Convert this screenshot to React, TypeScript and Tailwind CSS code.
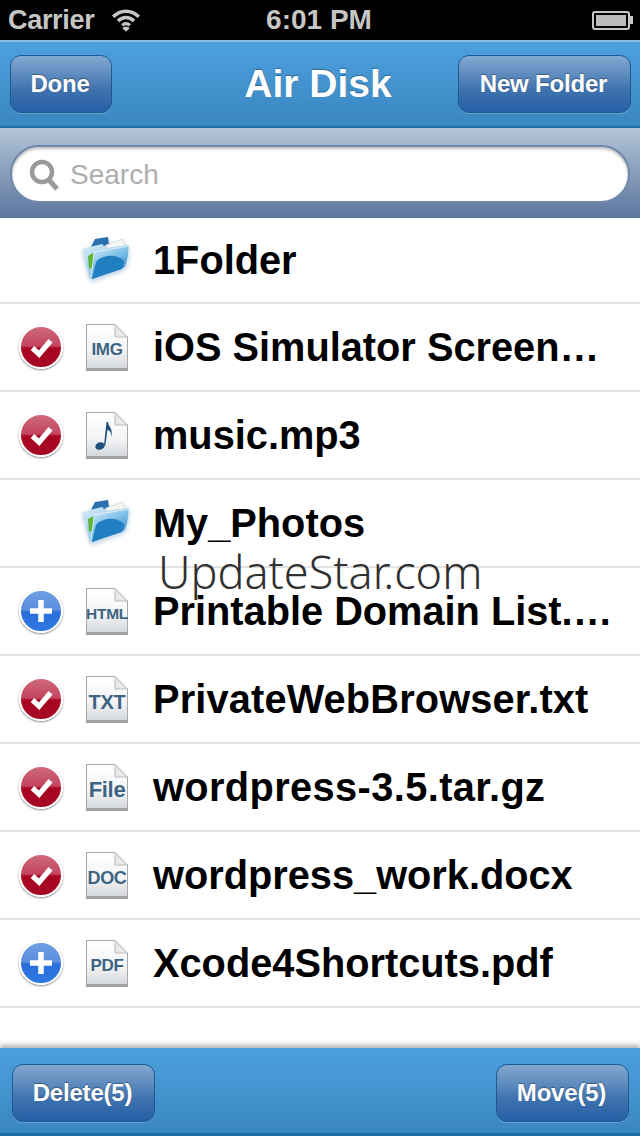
import React from "react";

const FONT = "[font-family:'Liberation_Sans',Arial,sans-serif]";

function Check() {
  return (
    <div className="flex h-[44px] w-[44px] items-center justify-center rounded-full border-2 border-white bg-[linear-gradient(180deg,#cf6a7c_0%,#c2465f_48%,#aa0420_52%,#a50a24_100%)] shadow-[0_1px_2px_rgba(0,0,0,0.5)]">
      <svg width="23" height="21" viewBox="0 0 24 22">
        <path d="M2.5 11.5 L9.5 18 L21.5 4" fill="none" stroke="#fff" strokeWidth="5.5" />
      </svg>
    </div>
  );
}

function Plus() {
  return (
    <div className="flex h-[44px] w-[44px] items-center justify-center rounded-full border-2 border-white bg-[linear-gradient(180deg,#6f9fe2_0%,#5a8fdf_48%,#2a6fdc_52%,#2f78e0_100%)] shadow-[0_1px_2px_rgba(0,0,0,0.5)]">
      <svg width="22" height="22" viewBox="0 0 22 22">
        <path d="M0 11 H22 M11 0 V22" fill="none" stroke="#fff" strokeWidth="5.5" />
      </svg>
    </div>
  );
}

function Doc({ label, size, music }: { label?: string; size?: string; music?: boolean }) {
  return (
    <div className="relative ml-[3px] h-[47px] w-[42px]">
      <svg width="42" height="47" viewBox="0 0 42 47" className="absolute left-0 top-0">
        <defs>
          <linearGradient id="docfill" x1="0" y1="0" x2="0" y2="1">
            <stop offset="0" stopColor="#ffffff" />
            <stop offset="0.6" stopColor="#f2f3f5" />
            <stop offset="1" stopColor="#d4d7da" />
          </linearGradient>
        </defs>
        <path d="M0.5 0.5 H29 L41.5 13 V45 H0.5 Z" fill="url(#docfill)" stroke="#a8a8a8" />
        <path d="M29 0.5 V13 H41.5 Z" fill="#e8e8e8" stroke="#bdbdbd" />
        <rect x="0" y="44" width="42" height="3" fill="#a0a0a0" />
        {music && (
          <g fill="#1f4f7c">
            <ellipse cx="14" cy="34" rx="4.8" ry="3.6" transform="rotate(-20 14 34)" />
            <path d="M18 33 L20.5 10 L22 10 C22.5 15 27 16 25.5 25 C25 19 23 18 21.5 18 L19.2 34 Z" />
          </g>
        )}
      </svg>
      {label && (
        <span
          className={`absolute inset-x-0 top-[14px] text-center font-bold leading-[24px] tracking-[-0.3px] text-[#3d6482] ${FONT} ${size ?? "text-[17px]"}`}
        >
          {label}
        </span>
      )}
    </div>
  );
}

function Folder() {
  return (
    <svg width="48" height="46" viewBox="0 0 48 46" className="-ml-[1px] block drop-shadow-[0_2px_2px_rgba(60,120,170,0.35)]">
      <defs>
        <linearGradient id="fback" x1="0" y1="0" x2="1" y2="1">
          <stop offset="0" stopColor="#dcedf8" />
          <stop offset="1" stopColor="#5fb0e0" />
        </linearGradient>
        <linearGradient id="ffront" x1="0" y1="0" x2="0.6" y2="1">
          <stop offset="0" stopColor="#dff0fa" />
          <stop offset="0.5" stopColor="#7cc0e8" />
          <stop offset="1" stopColor="#2d86c6" />
        </linearGradient>
      </defs>
      <path d="M8 12 L13 2 L26 0 L27 7 L8 14 Z" fill="#2a6fb0" />
      <path d="M24 8 L41 2 L44 12 L26 16 Z" fill="#f4f6f2" stroke="#c8d0d0" strokeWidth="0.6" />
      <path d="M0 12 L20 7 L24 11 L47 8 L44 28 L8 42 Z" fill="url(#fback)" />
      <path d="M6 19 L13 15 L11 30 L7 32 Z" fill="#5cb335" />
      <path d="M12 15 L47 9 C47 20 44 30 42 31 L9 43 Z" fill="url(#ffront)" stroke="#e8f4fb" strokeWidth="0.8" />
      <path d="M10 42 L14 25 C20 18 34 16 42 24 C42 27 41 30 40 32 Z" fill="#1f7fc0" />
    </svg>
  );
}

function Bevel({ children, className }: { children: React.ReactNode; className: string }) {
  return (
    <div
      className={`flex h-[58px] items-center justify-center rounded-[11px] border border-[#1d5a92] bg-[linear-gradient(180deg,#84a8d0_0%,#5c8abd_35%,#3f72ae_60%,#2660a6_100%)] pr-[2px] font-bold tracking-[-0.2px] text-white [text-shadow:0_-1px_1px_rgba(0,0,0,0.35)] shadow-[0_1px_0_rgba(255,255,255,0.2)] ${className}`}
    >
      {children}
    </div>
  );
}

type RowData = { name: string; mark?: "check" | "plus"; icon: React.ReactNode; h: string; t?: string };

const rows: RowData[] = [
  { name: "1Folder", icon: <Folder />, h: "h-[86px]" },
  { name: "iOS Simulator Screen…", mark: "check", icon: <Doc label="IMG" />, h: "h-[88px]" },
  { name: "music.mp3", mark: "check", icon: <Doc music />, h: "h-[88px]" },
  { name: "My_Photos", icon: <Folder />, h: "h-[88px]" },
  { name: "Printable Domain List.…", mark: "plus", icon: <Doc label="HTML" size="text-[15.5px]" />, h: "h-[88px]" },
  { name: "PrivateWebBrowser.txt", mark: "check", icon: <Doc label="TXT" size="text-[20px]" />, h: "h-[88px]", t: "tracking-[0.15px]" },
  { name: "wordpress-3.5.tar.gz", mark: "check", icon: <Doc label="File" size="text-[22px]" />, h: "h-[88px]", t: "tracking-[0.4px]" },
  { name: "wordpress_work.docx", mark: "check", icon: <Doc label="DOC" size="text-[18px]" />, h: "h-[88px]" },
  { name: "Xcode4Shortcuts.pdf", mark: "plus", icon: <Doc label="PDF" />, h: "h-[88px]" },
];

export default function App() {
  return (
    <div className={`relative flex h-[1136px] w-[640px] flex-col overflow-hidden bg-white ${FONT}`}>
      <div className="flex h-[40px] items-center justify-between bg-black pl-[8px] pr-[7px] text-[#c6c6c6]">
        <div className="flex w-[200px] items-center gap-[17px]">
          <span className="text-[27px] font-bold tracking-[-0.3px]">Carrier</span>
          <svg width="30" height="26" viewBox="0 0 28 24">
            <path d="M2 9 C9 2 19 2 26 9 M6.5 13 C11 8.5 17 8.5 21.5 13 M10.5 17 C12.5 15 15.5 15 17.5 17" fill="none" stroke="#c6c6c6" strokeWidth="3.2" />
            <path d="M14 23 L10.5 19.5 C12.5 17.8 15.5 17.8 17.5 19.5 Z" fill="#c6c6c6" />
          </svg>
        </div>
        <span className="pr-[3px] text-[28px] font-bold">6:01 PM</span>
        <div className="flex w-[200px] items-center justify-end">
          <div className="flex h-[19px] w-[38px] items-center rounded-[3px] border-2 border-[#c6c6c6] p-[2px]">
            <div className="h-full w-full bg-[#bdbdbd]" />
          </div>
          <div className="h-[8px] w-[3px] bg-[#c6c6c6]" />
        </div>
      </div>

      <div className="grid h-[88px] grid-cols-[1fr_auto_1fr] items-center border-t-2 border-b-2 border-t-[#8cbbdf] border-b-[#1c6fa8] bg-linear-to-b from-[#4da0de] to-[#3a86c0] px-[9px]">
        <Bevel className="ml-px w-[102px] justify-self-start text-[24px]">Done</Bevel>
        <span className="pr-[4px] text-[39px] font-bold text-white [text-shadow:0_-1px_1px_rgba(0,0,0,0.3)]">Air Disk</span>
        <Bevel className="w-[173px] justify-self-end text-[24px]">New Folder</Bevel>
      </div>

      <div className="flex h-[90px] items-center bg-linear-to-b from-[#b3c5d8] to-[#5d769e] px-[10px] pt-[2px]">
        <div className="flex h-[58px] w-full items-center rounded-full border-2 border-[#6f88a8] bg-white pl-[17px] pt-[2px] shadow-[inset_0_2px_3px_rgba(0,0,0,0.25)]">
          <svg width="30" height="32" viewBox="0 0 30 32">
            <circle cx="13" cy="13" r="10" fill="none" stroke="#9a9a9a" strokeWidth="4.5" />
            <path d="M20 21 L28 30" stroke="#9a9a9a" strokeWidth="5" />
          </svg>
          <span className="ml-[11px] text-[28px] text-[#aeaeae]">Search</span>
        </div>
      </div>

      <div className="flex-1 bg-white">
        {rows.map((r) => (
          <div key={r.name} className={`flex items-center border-b-2 border-[#e2e2e2] pl-[19px] ${r.h}`}>
            <div className="flex h-[44px] w-[44px] items-center justify-center">
              {r.mark === "check" && <Check />}
              {r.mark === "plus" && <Plus />}
            </div>
            <div className="ml-[20px] flex w-[48px] justify-start">{r.icon}</div>
            <span className={`ml-[22px] whitespace-nowrap pt-[2px] text-[39.75px] font-bold leading-none text-black ${r.t ?? ""}`}>{r.name}</span>
          </div>
        ))}
      </div>

      <div className="flex h-[88px] items-center justify-between border-b-[3px] border-b-[#1c6fa8] bg-linear-to-b from-[#4da0de] to-[#3a86c0] pl-[12px] pr-[11px] pt-[5px] shadow-[0_-3px_5px_rgba(0,0,0,0.3)]">
        <Bevel className="w-[143px] text-[24px]">Delete(5)</Bevel>
        <Bevel className="w-[133px] text-[24px]">Move(5)</Bevel>
      </div>

      <span className="absolute left-[158px] top-[542px] text-[45px] leading-[60px] text-[#303030] [font-family:'Noto_Sans',sans-serif] font-light">
        UpdateStar.com
      </span>
    </div>
  );
}
